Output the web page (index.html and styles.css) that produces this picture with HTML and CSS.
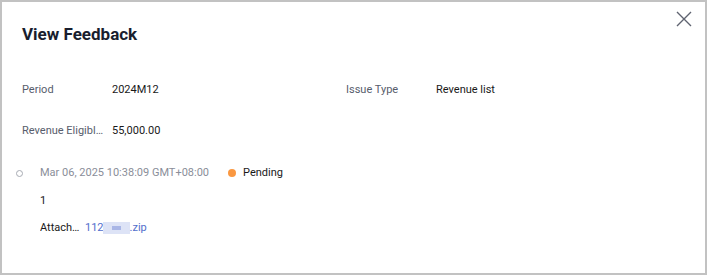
FILE: index.html
```html
<!DOCTYPE html>
<html lang="en">
<head>
    <meta charset="UTF-8">
    <meta name="viewport" content="width=device-width, initial-scale=1.0">
    <title>View Feedback</title>
    <link rel="stylesheet" href="styles.css">
</head>
<body>
    <div class="dialog">
        <div class="header">
            <h2>View Feedback</h2>
            <button class="close" aria-label="Close">
                <svg width="16" height="16" viewBox="0 0 16 16">
                    <path d="M1 1 L15 15 M15 1 L1 15" stroke="#5f6370" stroke-width="1.4" fill="none"/>
                </svg>
            </button>
        </div>

        <div class="fields">
            <div class="field">
                <span class="label">Period</span>
                <span class="value">2024M12</span>
            </div>
            <div class="field">
                <span class="label">Issue Type</span>
                <span class="value">Revenue list</span>
            </div>
            <div class="field">
                <span class="label">Revenue Eligible Amount</span>
                <span class="value">55,000.00</span>
            </div>
        </div>

        <div class="timeline">
            <div class="tl-head">
                <span class="tl-dot"></span>
                <span class="tl-time">Mar 06, 2025 10:38:09 GMT+08:00</span>
                <span class="status"><span class="status-dot"></span>Pending</span>
            </div>
            <div class="tl-body">
                <p class="comment">1</p>
                <p class="attach">
                    <span class="attach-label">Attachments</span>
                    <a href="#" class="file">112<span class="masked"><span class="mask-mid"></span></span>.zip</a>
                </p>
            </div>
        </div>
    </div>
</body>
</html>
```

FILE: styles.css
```css
* {
    box-sizing: border-box;
}
body {
    margin: 0;
    font-family: Roboto, "Liberation Sans", Arial, sans-serif;
    background: #fff;
}
.dialog {
    width: 707px;
    height: 275px;
    border: 2px solid #c2c2c2;
    background: #fff;
    padding: 0 20px 0 20px;
}
.header {
    display: flex;
    justify-content: space-between;
    align-items: flex-start;
    height: 81px;
}
h2 {
    margin: 22px 0 0 0;
    font-size: 17px;
    font-weight: bold;
    color: #191e2e;
    line-height: 20px;
}
.close {
    margin: 9px -7px 0 0;
    padding: 0;
    border: none;
    background: none;
    width: 16px;
    height: 16px;
    cursor: pointer;
}

/* key / value grid */
.fields {
    display: grid;
    grid-template-columns: 324px 1fr;
    row-gap: 27px;
    font-size: 11px;
    line-height: 14px;
}
.field {
    display: flex;
}
.label {
    flex: none;
    width: 90px;
    padding-right: 4px;
    color: #575d6c;
    white-space: nowrap;
    overflow: hidden;
    text-overflow: ellipsis;
}
.value {
    color: #191919;
}

/* history */
.timeline {
    margin-top: 28px;
    font-size: 11px;
    line-height: 14px;
}
.tl-head {
    display: flex;
    align-items: center;
}
.tl-dot {
    width: 7px;
    height: 7px;
    border: 1px solid #a8abb3;
    border-radius: 50%;
    margin: 0 17px 0 -6px;
}
.tl-time {
    color: #8a8e99;
}
.status {
    margin-left: 19px;
    color: #191919;
    display: flex;
    align-items: center;
}
.status-dot {
    width: 8px;
    height: 8px;
    border-radius: 50%;
    background: #fa9841;
    margin-right: 7px;
}
.tl-body {
    padding-left: 18px;
}
.comment {
    margin: 14px 0 0 0;
    color: #191919;
}
.attach {
    margin: 13px 0 0 0;
    display: flex;
    color: #191919;
}
.attach-label {
    flex: none;
    width: 45px;
    white-space: nowrap;
    overflow: hidden;
    text-overflow: ellipsis;
}
.file {
    color: #526ecc;
    text-decoration: none;
    display: flex;
    align-items: center;
}
.masked {
    display: inline-flex;
    align-items: center;
    justify-content: center;
    width: 27px;
    height: 12px;
    margin-left: -1px;
    background: #dde3f6;
}
.mask-mid {
    width: 9px;
    height: 4px;
    background: #a9b6e6;
}
```
